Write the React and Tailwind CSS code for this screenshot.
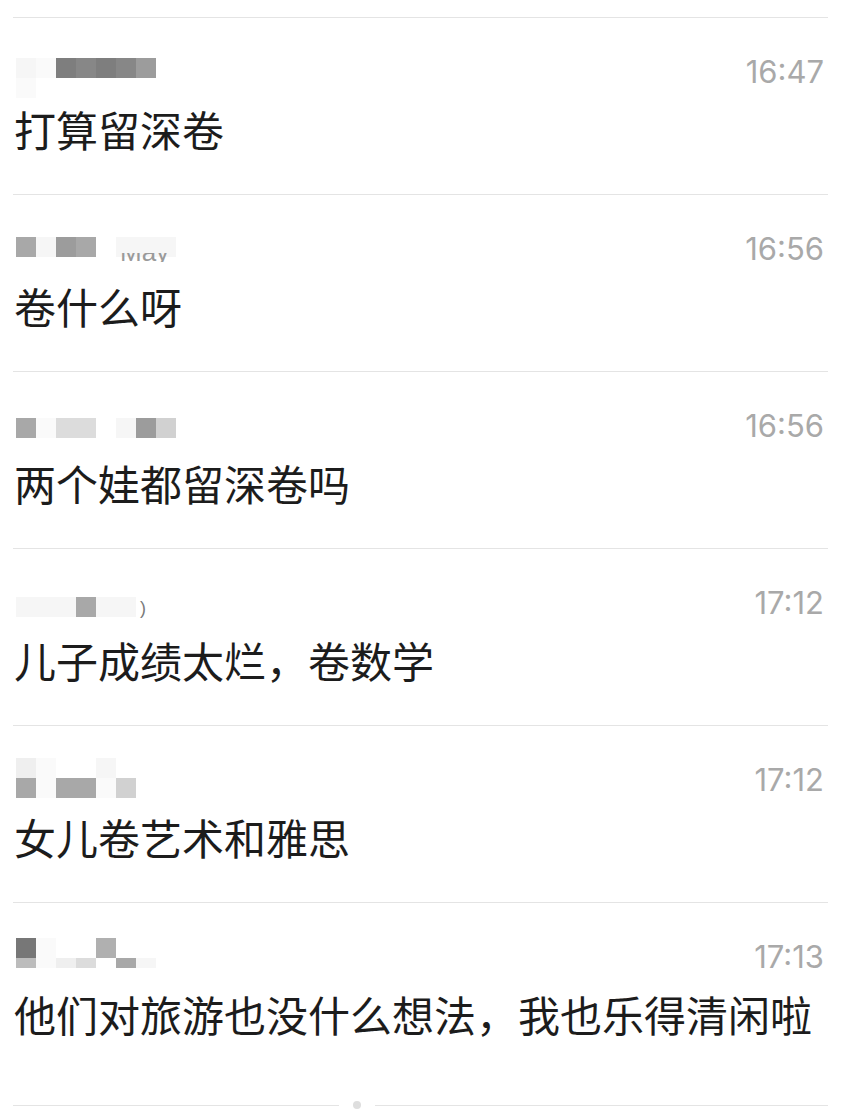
import React from "react";

const shades = {
  w: "bg-white",
  a: "bg-[#f6f6f6]",
  b: "bg-[#fafafa]",
  c: "bg-[#efefef]",
  d: "bg-[#dcdcdc]",
  e: "bg-[#d1d1d1]",
  f: "bg-[#bcbcbc]",
  g: "bg-[#b0b0b0]",
  h: "bg-[#a8a8a8]",
  i: "bg-[#9c9c9c]",
  j: "bg-[#878787]",
  k: "bg-[#7e7e7e]",
  l: "bg-[#777777]",
};

const messages = [
  {
    time: "16:47",
    text: "打算留深卷",
    offset: "mt-[2px]",
    mosaic: ["abkjkji", "b"],
  },
  {
    time: "16:56",
    text: "卷什么呀",
    offset: "mt-[4px]",
    mosaic: ["haihwaaa"],
    tail: "May",
  },
  {
    time: "16:56",
    text: "两个娃都留深卷吗",
    offset: "mt-[8px]",
    mosaic: ["hbddwaie"],
  },
  {
    time: "17:12",
    text: "儿子成绩太烂，卷数学",
    offset: "mt-[10px]",
    mosaic: ["aaahaa"],
    mark: ")",
  },
  {
    time: "17:12",
    text: "女儿卷艺术和雅思",
    offset: "-mt-[6px]",
    mosaic: ["cbwwa", "hbhhbe"],
  },
  {
    time: "17:13",
    text: "他们对旅游也没什么想法，我也乐得清闲啦",
    offset: "-mt-[3px]",
    mosaic: ["lbwwg", "fbcdwha"],
    half: true,
    last: true,
  },
];

const Mosaic = ({ rows, half }) => (
  <div className="flex flex-col">
    {rows.map((row, r) => (
      <div
        key={r}
        className={`flex ${half && r === rows.length - 1 ? "h-[10px]" : "h-5"}`}
      >
        {row.split("").map((s, c) => (
          <div key={c} className={`w-5 h-full ${shades[s]}`} />
        ))}
      </div>
    ))}
  </div>
);

const Row = ({ m }) => (
  <div
    className={`border-t border-[#e4e4e4] pt-[38px] ${
      m.last ? "pb-[70px]" : "pb-[44px]"
    }`}
  >
    <div className="flex justify-between items-start h-[52px]">
      <div className={`ml-[3px] flex items-end ${m.offset}`}>
        <div className="flex flex-col">
          <Mosaic rows={m.mosaic} half={m.half} />
          {m.tail && (
            <div className="h-[9px] overflow-hidden -mt-[4px] pl-[104px]">
              <div className="-mt-[14px] text-[26px] leading-none text-[#9a9a9a] font-['Liberation_Sans',sans-serif]">
                {m.tail}
              </div>
            </div>
          )}
        </div>
        {m.mark && (
          <span className="ml-[4px] text-[18px] leading-none text-[#7a7a7a] font-['Liberation_Sans',sans-serif]">
            {m.mark}
          </span>
        )}
      </div>
      <span className="pr-[4px] text-[31px] leading-none text-[#a9a9a9] font-['Inter','Liberation_Sans',sans-serif]">
        {m.time}
      </span>
    </div>
    <p className="pl-[1px] text-[42px] leading-none text-[#1c1c1c] whitespace-nowrap font-['Noto_Sans_CJK_SC','Noto_Sans',sans-serif]">
      {m.text}
    </p>
  </div>
);

export default function App() {
  return (
    <div className="w-[864px] h-[1116px] bg-white overflow-hidden">
      <div className="ml-[13px] w-[815px] pt-[17px]">
        {messages.map((m, i) => (
          <Row key={i} m={m} />
        ))}
        <div className="flex items-center -mt-[4px] h-2">
          <div className="w-[326px] h-px bg-[#e4e4e4]" />
          <div className="ml-[14px] w-2 h-2 rounded-full bg-[#dedede]" />
          <div className="ml-[14px] flex-1 h-px bg-[#e4e4e4]" />
        </div>
      </div>
    </div>
  );
}
